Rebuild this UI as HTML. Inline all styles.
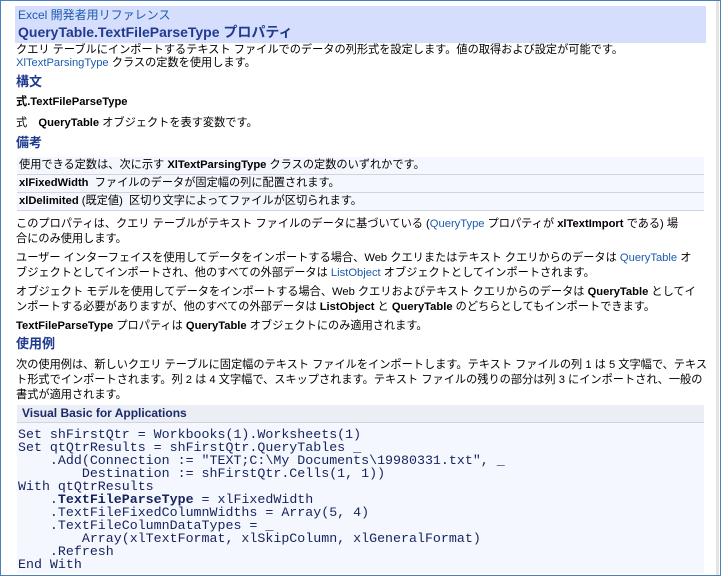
<!DOCTYPE html>
<html><head><meta charset="utf-8"><style>
body{margin:0;width:721px;height:576px;overflow:hidden;background:#fff;position:relative;font-family:"Liberation Sans","Noto Sans CJK JP",sans-serif;font-size:11.2px;color:#000}
.frame{position:absolute;left:0;top:0;width:719px;height:574px;border:1px solid #4a80c0}
.sb{position:absolute;left:716px;top:1px;width:3px;height:574px;background:#e4e4e4}
.l{position:absolute;left:16px;white-space:nowrap;line-height:14px}
.a{color:#1c5bb0}
b{font-weight:bold}
.h{font-weight:bold;font-size:13px;color:#1f3a8f}
.hdr{position:absolute;left:15px;top:6px;width:691px;height:37px;background:#d6defd}
.row{position:absolute;left:17px;width:687px;height:17px;background:#f5f7fe;border-bottom:1px solid #d0d4dc}
.code{position:absolute;left:17px;top:423px;width:687px;height:150px;background:#f5f7fe}
.ch{position:absolute;left:17px;top:405px;width:687px;height:17px;background:#ebeef5;border-bottom:1px solid #d0d4dc}
.c{position:absolute;left:18px;white-space:pre;font-family:"Liberation Mono",monospace;font-size:13.3px;line-height:13px;color:#14235e}
</style></head><body>
<div class="frame"></div><div class="sb"></div>
<div class="hdr"></div>
<div class="l a" style="left:18px;top:8px;font-size:12px">Excel 開発者用リファレンス</div>
<div class="l" style="left:18px;top:24px;font-size:14px;font-weight:bold;color:#1f3a8f;line-height:16px">QueryTable.TextFileParseType プロパティ</div>
<div class="l" style="top:43px">クエリ テーブルにインポートするテキスト ファイルでのデータの列形式を設定します。値の取得および設定が可能です。</div>
<div class="l" style="top:56px"><span class="a">XlTextParsingType</span> クラスの定数を使用します。</div>
<div class="l h" style="top:75px">構文</div>
<div class="l" style="top:95px"><b>式.TextFileParseType</b></div>
<div class="l" style="top:116px">式　<b>QueryTable</b> オブジェクトを表す変数です。</div>
<div class="l h" style="top:136px">備考</div>
<div class="row" style="top:157px"></div>
<div class="row" style="top:175px"></div>
<div class="row" style="top:193px"></div>
<div class="l" style="left:19px;top:158px">使用できる定数は、次に示す <b>XlTextParsingType</b> クラスの定数のいずれかです。</div>
<div class="l" style="left:19px;top:176px"><b>xlFixedWidth</b>&nbsp; ファイルのデータが固定幅の列に配置されます。</div>
<div class="l" style="left:19px;top:194px"><b>xlDelimited</b> (既定値)&nbsp; 区切り文字によってファイルが区切られます。</div>
<div class="l" style="top:217px">このプロパティは、クエリ テーブルがテキスト ファイルのデータに基づいている (<span class="a">QueryType</span> プロパティが <b>xlTextImport</b> である) 場</div>
<div class="l" style="top:232px">合にのみ使用します。</div>
<div class="l" style="top:251px">ユーザー インターフェイスを使用してデータをインポートする場合、Web クエリまたはテキスト クエリからのデータは <span class="a">QueryTable</span> オ</div>
<div class="l" style="top:266px">ブジェクトとしてインポートされ、他のすべての外部データは <span class="a">ListObject</span> オブジェクトとしてインポートされます。</div>
<div class="l" style="top:285px">オブジェクト モデルを使用してデータをインポートする場合、Web クエリおよびテキスト クエリからのデータは <b>QueryTable</b> としてイ</div>
<div class="l" style="top:300px">ンポートする必要がありますが、他のすべての外部データは <b>ListObject</b> と <b>QueryTable</b> のどちらとしてもインポートできます。</div>
<div class="l" style="top:319px"><b>TextFileParseType</b> プロパティは <b>QueryTable</b> オブジェクトにのみ適用されます。</div>
<div class="l h" style="top:337px">使用例</div>
<div class="l" style="top:358px">次の使用例は、新しいクエリ テーブルに固定幅のテキスト ファイルをインポートします。テキスト ファイルの列 1 は 5 文字幅で、テキス</div>
<div class="l" style="top:373px">ト形式でインポートされます。列 2 は 4 文字幅で、スキップされます。テキスト ファイルの残りの部分は列 3 にインポートされ、一般の</div>
<div class="l" style="top:388px">書式が適用されます。</div>
<div class="ch"></div>
<div class="l" style="left:22px;top:406px;font-weight:bold;font-size:12px;color:#1b2a6a">Visual Basic for Applications</div>
<div class="code"></div>
<div class="c" style="top:428px">Set shFirstQtr = Workbooks(1).Worksheets(1)
Set qtQtrResults = shFirstQtr.QueryTables _
    .Add(Connection := "TEXT;C:\My Documents\19980331.txt", _
        Destination := shFirstQtr.Cells(1, 1))
With qtQtrResults
    .<b>TextFileParseType</b> = xlFixedWidth
    .TextFileFixedColumnWidths = Array(5, 4)
    .TextFileColumnDataTypes = _
        Array(xlTextFormat, xlSkipColumn, xlGeneralFormat)
    .Refresh
End With</div>
</body></html>
